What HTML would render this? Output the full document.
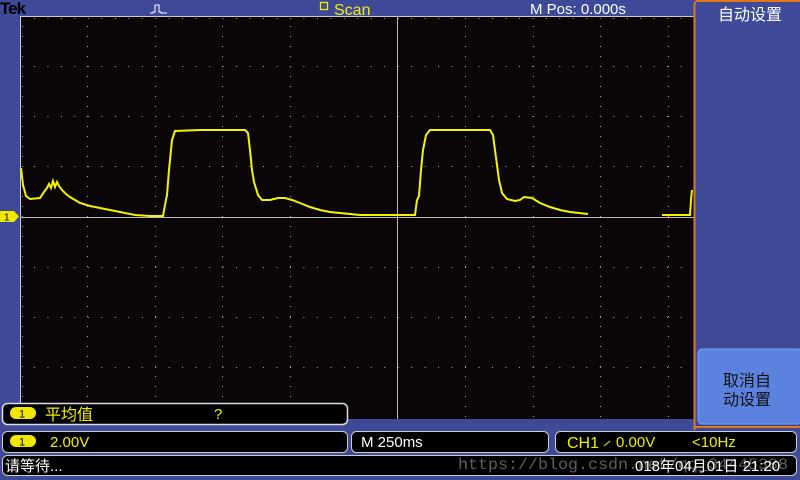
<!DOCTYPE html>
<html><head><meta charset="utf-8"><style>
body{margin:0;width:800px;height:480px;overflow:hidden;background:#3e4a98;font-family:"Liberation Sans","Noto Sans CJK SC",sans-serif}
svg{position:absolute;left:0;top:0}
</style></head><body>
<svg width="800" height="480" viewBox="0 0 800 480" xmlns="http://www.w3.org/2000/svg">
<rect width="800" height="480" fill="#3e4a98"/>
<rect x="20" y="16" width="674" height="403" fill="#0a0608"/>
<line x1="20" y1="16.5" x2="694" y2="16.5" stroke="#ccc" stroke-width="1"/>
<line x1="20.5" y1="16" x2="20.5" y2="419" stroke="#ccc" stroke-width="1"/>
<g stroke="#aaa" stroke-width="1">
<g stroke-dasharray="1 9">
<line x1="87.5" y1="26" x2="87.5" y2="419"/>
<line x1="155.5" y1="26" x2="155.5" y2="419"/>
<line x1="222.5" y1="26" x2="222.5" y2="419"/>
<line x1="290.5" y1="26" x2="290.5" y2="419"/>
<line x1="465.5" y1="26" x2="465.5" y2="419"/>
<line x1="533.5" y1="26" x2="533.5" y2="419"/>
<line x1="600.5" y1="26" x2="600.5" y2="419"/>
<line x1="668.5" y1="26" x2="668.5" y2="419"/>
<line x1="22.5" y1="26" x2="22.5" y2="419"/>
</g>
<g stroke-dasharray="1 12.47">
<line x1="34" y1="66.5" x2="694" y2="66.5"/>
<line x1="34" y1="116.5" x2="694" y2="116.5"/>
<line x1="34" y1="166.5" x2="694" y2="166.5"/>
<line x1="34" y1="267.5" x2="694" y2="267.5"/>
<line x1="34" y1="317.5" x2="694" y2="317.5"/>
<line x1="34" y1="367.5" x2="694" y2="367.5"/>
<line x1="34" y1="18.5" x2="694" y2="18.5"/>
</g>
</g>
<line x1="397.5" y1="16" x2="397.5" y2="419" stroke="#bbb" stroke-width="1"/>
<line x1="20" y1="217.5" x2="694" y2="217.5" stroke="#bbb" stroke-width="1"/>
<polyline fill="none" stroke="#f4f400" stroke-width="2" points="21,168 23,185 26,196 30,199 40,198 44,192 47,188 49,184 51,188 53,181 55,187 57,182 59,186 62,190 66,194 70,197 80,203 90,206 100,208 110,210 120,212 135,215 150,216 163,216 165,205 167,195 169,170 172,140 175,131 200,130 245,130 248,133 250,150 252,170 254,182 258,195 262,200 270,200 278,198 285,198 292,200 300,203 310,207 320,210 330,212 340,213 360,215 400,215 415,215 417,200 419,196 421,170 423,150 426,135 430,130 460,130 490,130 493,135 495,150 497,165 499,180 502,193 507,199 515,201 520,200 524,197 532,198 540,203 550,207 560,210 570,212 588,214"/>
<polyline fill="none" stroke="#f4f400" stroke-width="2" points="662,215 690,215 691,200 692,190"/>
<path d="M0,211 H14 L19,216.5 L14,222 H0 Z" fill="#f0e800"/>
<text x="4" y="220.5" font-size="10" fill="#000">1</text>
<text x="0" y="14" font-size="17" font-weight="bold" fill="#000" letter-spacing="-1">Tek</text>
<path d="M150,13 h3 v-1 h2 v-7 h4 v7 h2 v1 h6" fill="none" stroke="#fff" stroke-width="1"/>
<rect x="320.5" y="2.5" width="7" height="7" fill="none" stroke="#f0f000" stroke-width="1.3"/>
<text x="334" y="15" font-size="16" fill="#f0f000">Scan</text>
<text x="530" y="14" font-size="15" fill="#fff">M Pos: 0.000s</text>
<path d="M694.5,430 V5 Q694.5,1 698,1 H800" fill="none" stroke="#e07818" stroke-width="2"/>
<path d="M694,427 H800" stroke="#e07818" stroke-width="2"/>
<rect x="696" y="2" width="104" height="424" fill="#3e4a98"/>
<text x="718" y="20" font-size="16" fill="#fff">自动设置</text>
<rect x="698" y="349" width="104" height="75" rx="4" fill="#5b82de" stroke="#7aa0f0" stroke-width="1"/>
<text x="723" y="386" font-size="16" fill="#111">取消自</text>
<text x="723" y="405" font-size="16" fill="#111">动设置</text>
<rect x="2.5" y="403.5" width="345" height="21" rx="5" fill="#000" stroke="#ddd" stroke-width="1.5"/>
<rect x="10" y="407" width="26" height="12" rx="6" fill="#f0e800"/>
<text x="19" y="417.5" font-size="11" fill="#000">1</text>
<text x="45" y="420" font-size="16" fill="#f0f000">平均值</text>
<text x="214" y="419" font-size="15" fill="#f0f000">?</text>
<rect x="2.5" y="431.5" width="345" height="21" rx="5" fill="#000" stroke="#ccc" stroke-width="1"/>
<rect x="10" y="435" width="26" height="12" rx="6" fill="#f0e800"/>
<text x="19" y="445.5" font-size="11" fill="#000">1</text>
<text x="50" y="447" font-size="15" fill="#f0f000">2.00V</text>
<rect x="351.5" y="431.5" width="197" height="21" rx="5" fill="#000" stroke="#ccc" stroke-width="1"/>
<text x="361" y="447" font-size="15" fill="#fff">M 250ms</text>
<rect x="555.5" y="431.5" width="241" height="21" rx="5" fill="#000" stroke="#ccc" stroke-width="1"/>
<text x="567" y="448" font-size="16" fill="#f0f000">CH1</text>
<path d="M604,446 L610,441" stroke="#f0f000" stroke-width="1"/>
<text x="616" y="447" font-size="15" fill="#f0f000">0.00V</text>
<text x="692" y="447" font-size="15" fill="#f0f000">&lt;10Hz</text>
<rect x="2.5" y="455.5" width="794" height="20" rx="5" fill="#000" stroke="#ccc" stroke-width="1"/>
<text x="5" y="471" font-size="15" fill="#fff">请等待...</text>
<text x="458" y="469" font-size="16" fill="#888" fill-opacity="0.7" font-family="Liberation Mono" textLength="330" lengthAdjust="spacingAndGlyphs">https://blog.csdn.net/qq_34445388</text>
<text x="635" y="471" font-size="15" fill="#fff">018年04月01日 21:20</text>
</svg>
</body></html>
